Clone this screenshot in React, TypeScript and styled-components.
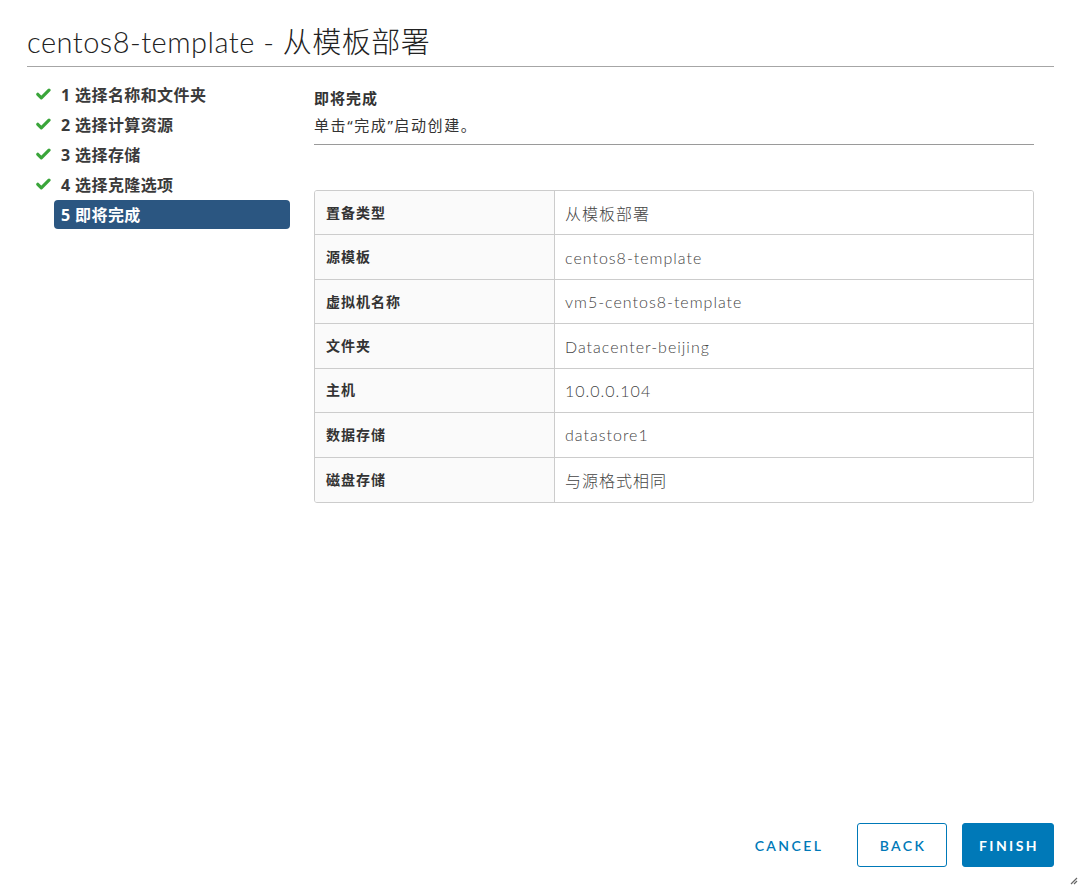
import { createGlobalStyle, styled } from "styled-components";

const GlobalStyle = createGlobalStyle`
  html, body {
    margin: 0;
    padding: 0;
    background: #ffffff;
  }
  body {
    font-family: "Noto Sans", "Noto Sans CJK SC", sans-serif;
    color: #333;
  }
`;

const Page = styled.div`
  position: relative;
  min-height: 100vh;
  box-sizing: border-box;
  display: flex;
  flex-direction: column;
  padding: 0 27px;
`;

const Header = styled.div`
  padding-top: 24px;
  height: 42px;
  border-bottom: 1px solid #a6a6a6;
`;

const Title = styled.h1`
  margin: 0;
  font-family: "Lato", "Noto Sans CJK SC", sans-serif;
  font-weight: 300;
  font-size: 29px;
  line-height: 36px;
  color: #222;
  letter-spacing: 0.5px;
`;

const Body = styled.div`
  flex: 1;
  display: flex;
  gap: 24px;
  padding-top: 12px;
`;

const Nav = styled.ul`
  list-style: none;
  margin: 0;
  padding: 0;
  width: 263px;
  flex-shrink: 0;
`;

const NavItem = styled.li`
  display: flex;
  align-items: center;
  height: 30px;
`;

const IconSlot = styled.span`
  width: 27px;
  display: flex;
  justify-content: flex-start;
  padding-left: 9px;
  box-sizing: border-box;
`;

const NavLabel = styled.span<{ $active?: boolean }>`
  flex: 1;
  height: 29px;
  display: flex;
  align-items: center;
  padding-left: 7px;
  border-radius: 4px;
  font-family: "Noto Sans", "Noto Sans CJK SC", sans-serif;
  font-size: 16px;
  font-weight: 700;
  letter-spacing: 0.4px;
  color: ${(p) => (p.$active ? "#ffffff" : "#3a3a3a")};
  background: ${(p) => (p.$active ? "#2b5681" : "transparent")};
`;

const Content = styled.div`
  flex: 1;
  margin-right: 20px;
`;

const StepHead = styled.div`
  padding-top: 9px;
  padding-bottom: 9px;
  border-bottom: 1px solid #9a9a9a;
`;

const StepTitle = styled.div`
  font-size: 15px;
  font-weight: 700;
  line-height: 20px;
  letter-spacing: 1px;
  color: #333;
`;

const StepDesc = styled.div`
  font-size: 15px;
  line-height: 20px;
  margin-top: 7px;
  letter-spacing: 1.6px;
  color: #333;
`;

const Table = styled.table`
  margin-top: 45px;
  width: 100%;
  border-collapse: separate;
  border-spacing: 0;
  border: 1px solid #cccccc;
  border-radius: 3px;
  overflow: hidden;
`;

const Row = styled.tr`
  height: 44.45px;
  &:not(:last-child) td {
    border-bottom: 1px solid #cccccc;
  }
`;

const LabelCell = styled.td`
  width: 217px;
  padding: 0 11px 2px 11px;
  background: #fafafa;
  border-right: 1px solid #cccccc;
  font-size: 14px;
  font-weight: 700;
  letter-spacing: 1px;
  color: #333;
  vertical-align: middle;
`;

const ValueCell = styled.td`
  padding: 0 10px;
  font-family: "Lato", "Noto Sans CJK SC", sans-serif;
  font-weight: 300;
  font-size: 16px;
  letter-spacing: 1px;
  color: #444;
  vertical-align: middle;
  background: #ffffff;
`;

const Footer = styled.div`
  display: flex;
  justify-content: flex-end;
  align-items: center;
  gap: 15px;
  padding-bottom: 21px;
`;

const Button = styled.button<{ $variant: "flat" | "outline" | "solid"; $w: number }>`
  width: ${(p) => p.$w}px;
  height: 44px;
  padding: 0 0 0 2px;
  border-radius: 3px;
  font-family: "Lato", sans-serif;
  font-size: 14px;
  font-weight: ${(p) => (p.$variant === "solid" ? 700 : 600)};
  letter-spacing: 2.4px;
  cursor: pointer;
  border: 1px solid ${(p) => (p.$variant === "flat" ? "transparent" : "#0079b8")};
  background: ${(p) => (p.$variant === "solid" ? "#0079b8" : "#ffffff")};
  color: ${(p) => (p.$variant === "solid" ? "#ffffff" : "#0079b8")};
`;

const Grip = styled.svg`
  position: absolute;
  right: 3px;
  bottom: 3px;
`;

const steps = [
  "1 选择名称和文件夹",
  "2 选择计算资源",
  "3 选择存储",
  "4 选择克隆选项",
];

const rows: [string, string][] = [
  ["置备类型", "从模板部署"],
  ["源模板", "centos8-template"],
  ["虚拟机名称", "vm5-centos8-template"],
  ["文件夹", "Datacenter-beijing"],
  ["主机", "10.0.0.104"],
  ["数据存储", "datastore1"],
  ["磁盘存储", "与源格式相同"],
];

function Check() {
  return (
    <svg width="15" height="12" viewBox="0 0 15 12">
      <path d="M1.8 6.3 L5.3 9.8 L13 2.2" fill="none" stroke="#3aa53a" strokeWidth="3.2" strokeLinecap="round" strokeLinejoin="round" />
    </svg>
  );
}

export default function App() {
  return (
    <>
      <GlobalStyle />
      <Page>
        <Header>
          <Title>centos8-template - 从模板部署</Title>
        </Header>
        <Body>
          <Nav>
            {steps.map((s) => (
              <NavItem key={s}>
                <IconSlot>
                  <Check />
                </IconSlot>
                <NavLabel>{s}</NavLabel>
              </NavItem>
            ))}
            <NavItem>
              <IconSlot />
              <NavLabel $active>5 即将完成</NavLabel>
            </NavItem>
          </Nav>
          <Content>
            <StepHead>
              <StepTitle>即将完成</StepTitle>
              <StepDesc>单击“完成”启动创建。</StepDesc>
            </StepHead>
            <Table>
              <tbody>
                {rows.map(([k, v]) => (
                  <Row key={k}>
                    <LabelCell>{k}</LabelCell>
                    <ValueCell>{v}</ValueCell>
                  </Row>
                ))}
              </tbody>
            </Table>
          </Content>
        </Body>
        <Footer>
          <Button $variant="flat" $w={108}>CANCEL</Button>
          <Button $variant="outline" $w={90}>BACK</Button>
          <Button $variant="solid" $w={92}>FINISH</Button>
        </Footer>
        <Grip width="10" height="10" viewBox="0 0 10 10">
          <path d="M9 3 L3 9 M9 6 L6 9" stroke="#666" strokeWidth="1.2" />
        </Grip>
      </Page>
    </>
  );
}
